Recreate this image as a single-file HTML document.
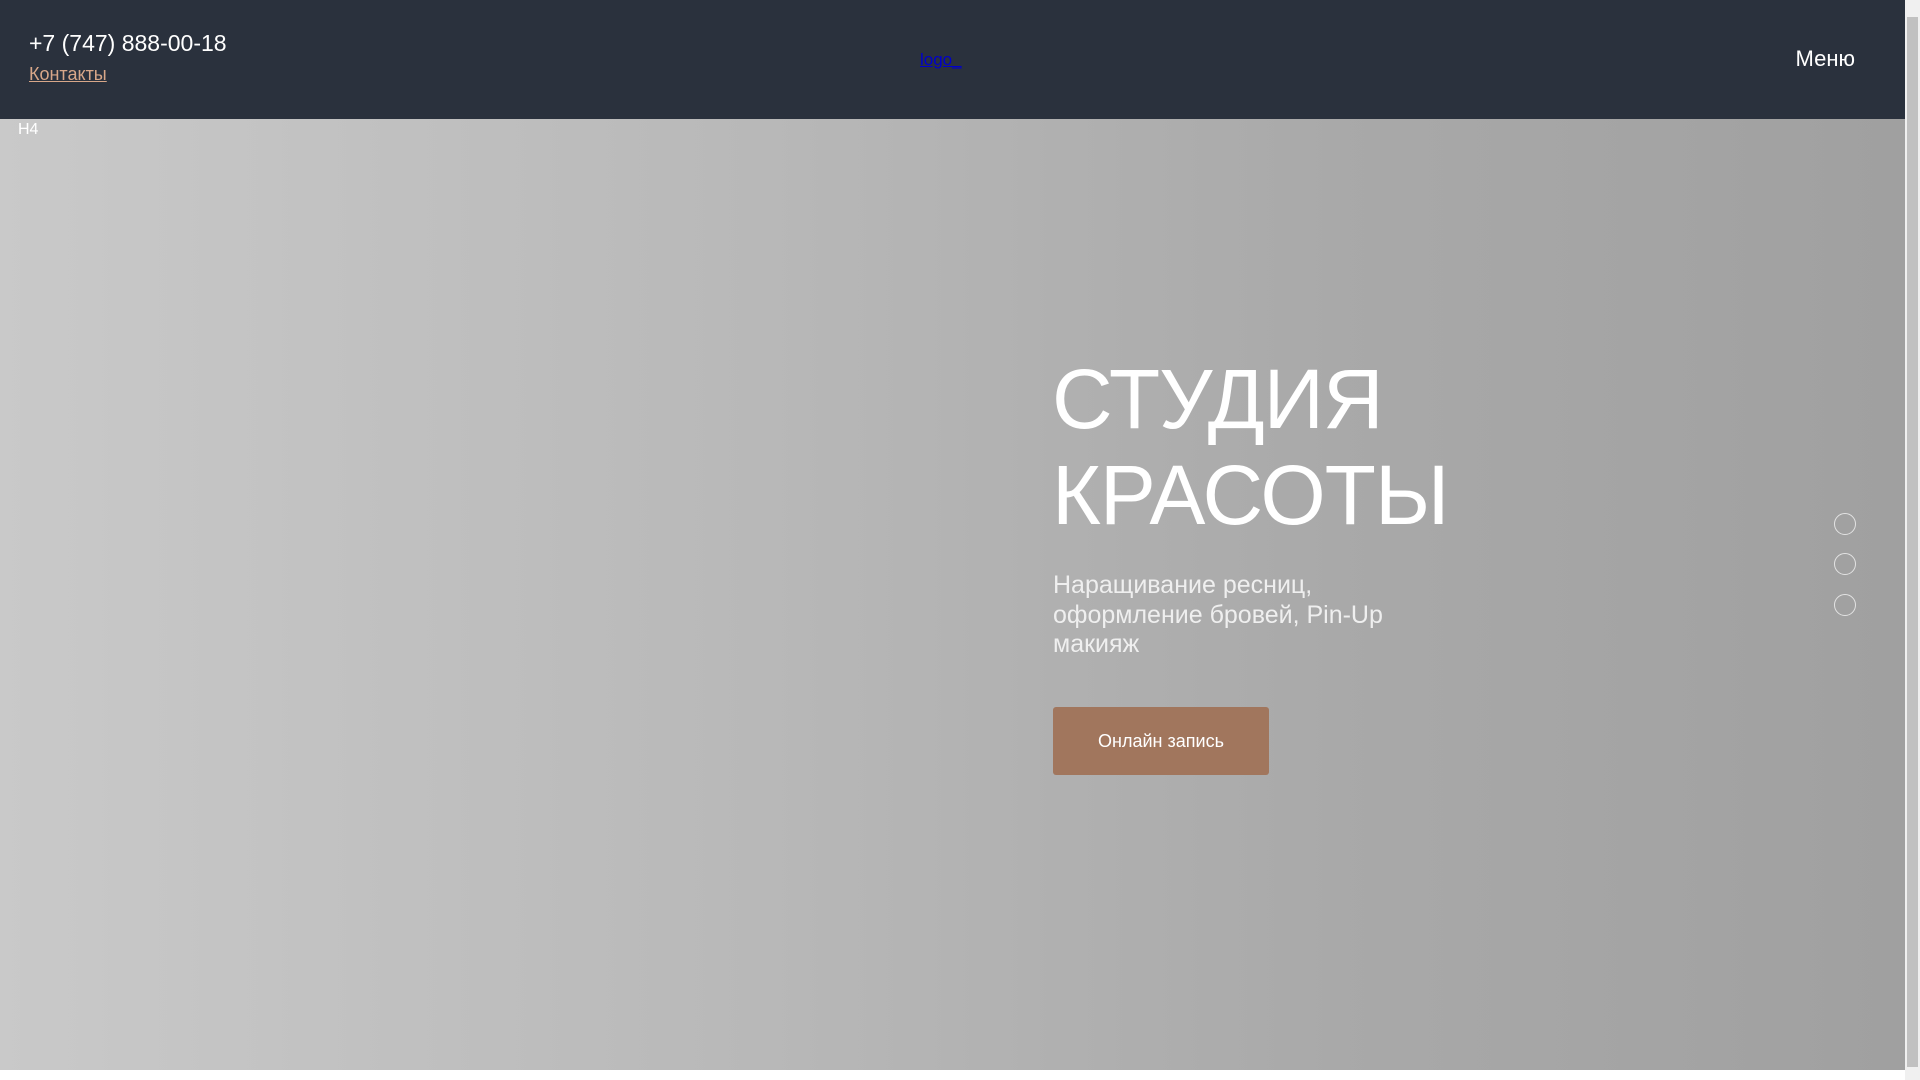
<!DOCTYPE html>
<html><head><meta charset="utf-8"><style>
*{margin:0;padding:0;box-sizing:border-box}
html,body{width:1920px;height:1080px;overflow:hidden;background:#fff;font-family:"Liberation Sans","DejaVu Sans",sans-serif}
.hdr{position:absolute;left:0;top:0;width:1905px;height:119px;background:#2a313d}
.phone{position:absolute;left:29px;top:30px;font-size:23px;color:#fff}
.cont{position:absolute;left:29px;top:64px;font-size:18px;color:#d8a789;text-decoration:underline}
.logo{position:absolute;left:906px;top:50px;font-size:17px;color:#00c;text-decoration:underline;padding-left:14px}
.menu{position:absolute;right:50px;top:46px;font-size:22px;color:#fff}
.hero{position:absolute;left:0;top:119px;width:1905px;height:951px;background:linear-gradient(90deg,#c9c9c9 0%,#b8b8b8 40%,#a9a9a9 70%,#a0a0a0 100%)}
.h4{position:absolute;left:2px;top:2px;font-size:16px;color:#fff;padding-left:16px}
.t{position:absolute;left:1052px;top:232px;font-size:84px;line-height:96px;color:#fff;letter-spacing:-1px}
.s{position:absolute;left:1053px;top:452px;font-size:25px;line-height:29.5px;color:#efefef;white-space:nowrap}
.btn{position:absolute;left:1053px;top:588px;width:216px;height:68px;background:#a1765d;border-radius:3px;color:#fff;font-size:18px;text-align:center;line-height:68px}
.dot{position:absolute;left:1834px;width:22px;height:22px;border:1px solid rgba(255,255,255,.7);border-radius:50%}
.sb{position:absolute;left:1905px;top:0;width:15px;height:1080px;background:#f0f0f0}
.sb i{position:absolute;left:2px;top:17px;width:11px;height:1050px;background:#c1c1c1}
</style></head><body>
<div class="hdr">
<div class="phone">+7 (747) 888-00-18</div>
<div class="cont">Контакты</div>
<div class="logo">logo_</div>
<div class="menu">Меню</div>
</div>
<div class="hero">
<div class="h4">H4</div>
<div class="t">СТУДИЯ<br>КРАСОТЫ</div>
<div class="s">Наращивание ресниц,<br>оформление бровей, Pin-Up<br>макияж</div>
<div class="btn">Онлайн запись</div>
<div class="dot" style="top:394px"></div>
<div class="dot" style="top:434px"></div>
<div class="dot" style="top:475px"></div>
</div>
<div class="sb"><i></i></div>
</body></html>
